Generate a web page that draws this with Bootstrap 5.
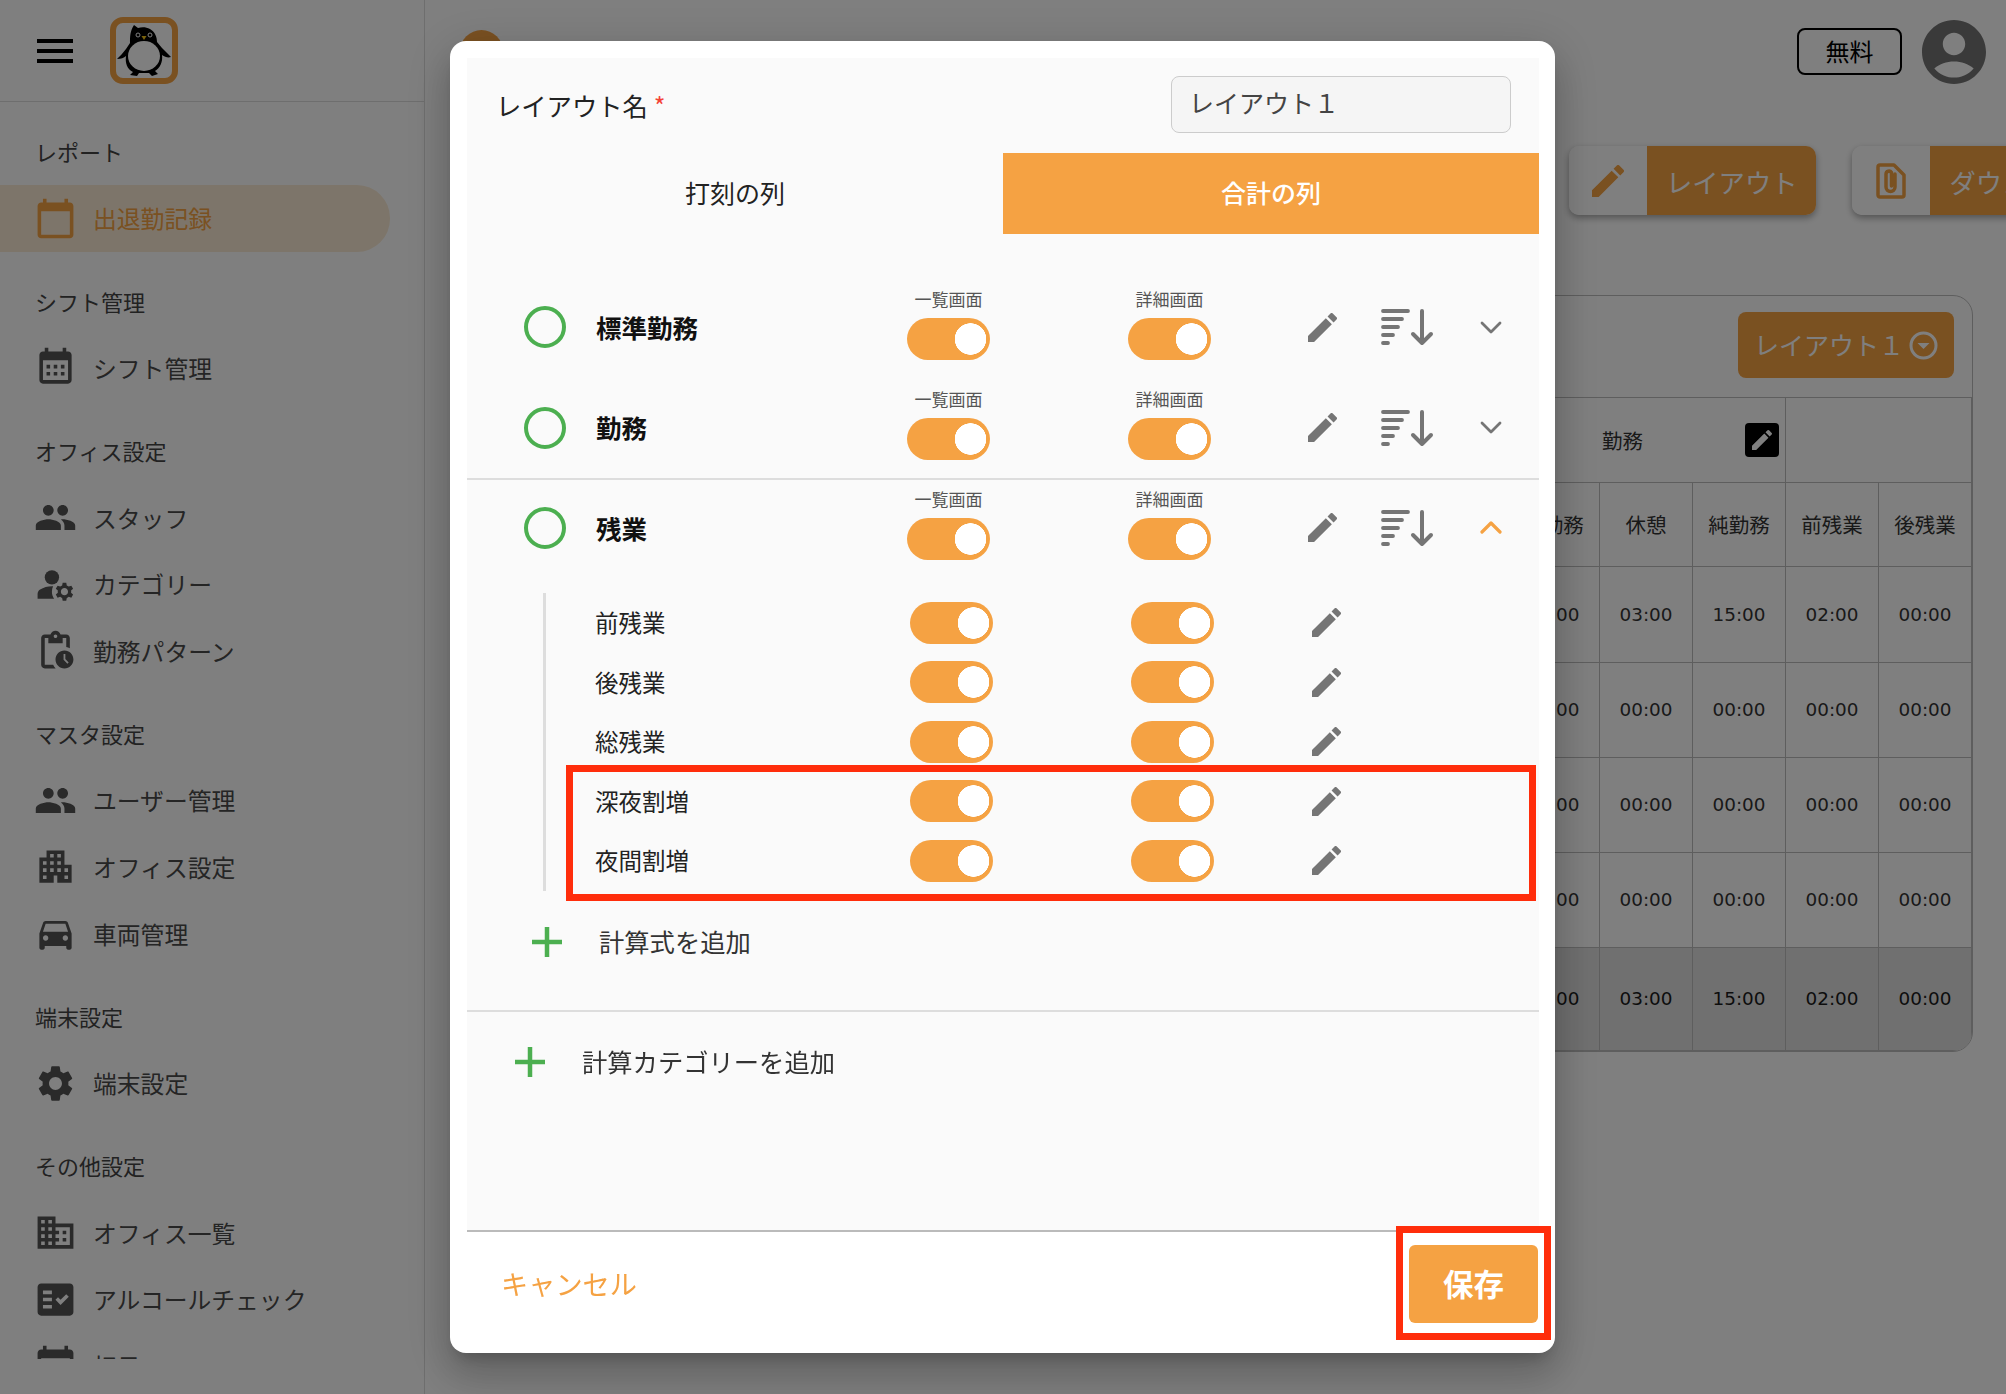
<!DOCTYPE html>
<html lang="ja">
<head>
  <meta charset="UTF-8" />
  <meta name="viewport" content="width=device-width, initial-scale=1.0" />
  <title>レイアウト</title>
  <link href="https://cdn.jsdelivr.net/npm/bootstrap@5.3.3/dist/css/bootstrap.min.css" rel="stylesheet" />
  <style>
    :root { --app-orange: #f5a243; --app-green: #4caf50; --app-red: #ff2d0b; }
    body { font-family: "Noto Sans CJK JP", "Noto Sans", sans-serif; height: 100vh; overflow: hidden; background: #fff; color: #333; }
    .ic { fill: currentColor; display: block; flex-shrink: 0; }

    /* sidebar */
    .side { width: 425px; border-right: 1px solid #ddd; flex-shrink: 0; }
    .side-top { height: 102px; border-bottom: 1px solid #ddd; padding-left: 37px; }
    .burger { width: 36px; height: 24px; border-top: 4px solid #000; border-bottom: 4px solid #000; position: relative; }
    .burger::after { content: ""; position: absolute; left: 0; right: 0; top: 6px; height: 4px; background: #000; }
    .logo { width: 68px; height: 67px; margin-left: 37px; border: 6px solid var(--app-orange); border-radius: 13px; }
    .side-nav { height: 1257px; overflow: hidden; padding-top: 17px; }
    .side-sec { margin-bottom: 17px; }
    .side-title { height: 66px; line-height: 64px; padding-left: 35px; font-size: 22px; color: #444; }
    .side-item { height: 66.6px; display: flex; align-items: center; padding-left: 34px; font-size: 23.8px; color: #4a4a4a; width: 390px; text-decoration: none; }
    .side-item .ic { width: 43px; height: 43px; margin-right: 16px; color: #555; }
    .side-item.active { background: #fbebd5; color: var(--app-orange); border-radius: 0 33px 33px 0; }
    .side-item.active .ic { color: var(--app-orange); }

    /* page behind the dialog */
    .topbar { height: 103px; padding: 0 20px 0 35px; }
    .back-dot { width: 43px; height: 43px; background: var(--app-orange); }
    .plan { width: 105px; height: 47px; border: 2px solid #000; border-radius: 8px; font-size: 24px; color: #000; line-height: 42px; margin-right: 20px; }
    .avatar { width: 64px; height: 64px; color: #757575; }
    .tools { margin: 43px 0 0 1144px; gap: 36px; }
    .tool { height: 69px; border-radius: 10px; overflow: hidden; box-shadow: 0 3px 7px rgba(0,0,0,.35); flex-shrink: 0; }
    .tool-ic { width: 78px; color: var(--app-orange); background: #fff; }
    .tool-tx { background: var(--app-orange); color: #fff; font-size: 26.3px; padding: 3px 19px 0; white-space: nowrap; }
    .sheet { margin: 80px 33px 0 35px; border: 1px solid #bdbdbd; border-radius: 20px; overflow: hidden; background: #fff; }
    .sheet-top { height: 101px; padding: 16px 18px 0 0; }
    .layout-sel { width: 216px; height: 66px; background: var(--app-orange); border-radius: 8px; color: #fff; font-size: 25px; gap: 5px; }
    .grid { table-layout: fixed; margin: 0; --bs-border-color: #bdbdbd; }
    .grid td { padding: 0; text-align: center; vertical-align: middle; font-size: 20.5px; color: #333; }
    .grid .t { font-family: "DejaVu Sans", sans-serif; font-size: 18.4px; }
    .grid col.c { width: 93px; }
    .grid tr.total td { background: #e0e0e0; color: #1a1a1a; }
    .grp { padding-right: 6px; }
    .grp span { margin-right: 102px; }
    .grp-edit { width: 34px; height: 34px; background: #000; color: #fff; border-radius: 4px; }

    /* dialog */
    .modal-dialog.dlg { max-width: 1105px; width: 1105px; margin: 41px 0 0 450px; }
    .dlg .modal-content { height: 1312px; border: 0; border-radius: 16px; padding: 17px 16px 0 17px; box-shadow: 0 11px 15px -7px rgba(0,0,0,.2), 0 24px 38px 3px rgba(0,0,0,.14), 0 9px 46px 8px rgba(0,0,0,.12); }
    .panel { height: 1174px; background: #fafafa; border-bottom: 2px solid #bbb; color: #222; font-size: 25.3px; }
    .pan-head { height: 95px; padding: 0 28px 0 29px; }
    .pan-head label { font-size: 25.3px; margin-top: 1px; }
    .pan-head label i { color: #f44336; font-style: normal; font-size: 25px; margin-left: 6px; line-height: 1; }
    .pan-head .form-control { width: 340px; height: 57px; background: #f5f5f5; border-color: #ccc; border-radius: 8px; padding: 0 17px 6px; font-size: 25px; color: #444; margin-top: -2px; }
    .tabs .nav-link { height: 81px; line-height: 78px; padding: 0; color: #222; font-size: 25px; border-radius: 0; }
    .tabs .nav-link.active { background: var(--app-orange); color: #fff; font-weight: 500; }
    .cat-list { margin-top: 43px; }
    .cat { display: flex; align-items: center; height: 100.4px; padding-left: 57px; }
    .cat.sep { border-top: 2px solid #ddd; padding-bottom: 2px; }
    .dot { width: 42px; height: 42px; border: 4px solid var(--app-green); margin-right: 30px; flex-shrink: 0; }
    .cat-name { width: 292.5px; font-weight: 700; color: #111; font-size: 25.5px; }
    .tog-col { width: 120px; align-self: flex-start; padding-top: 12px; text-align: center; }
    .cat.sep .tog-col { padding-top: 9px; }
    .tog-col small { display: block; height: 20px; line-height: 20px; margin-bottom: 9px; font-size: 17px; color: #555; }
    .tog-col + .tog-col { margin-left: 101px; }
    .tg.form-check.form-switch { padding: 0; margin: 0; min-height: 0; display: flex; justify-content: center; }
    .tg .form-check-input, .tg .form-check-input:checked { width: 83px; height: 42px; margin: 0; border: 0; border-radius: 21px; background: var(--app-orange) radial-gradient(circle at 63.5px 21px, #fff 15.5px, transparent 16px); box-shadow: none; }
    .act { color: #757575; }
    .act.edit { width: 29px; height: 29px; }
    .cat .edit { margin-left: 78px; }
    .cat .sort { margin-left: 44px; margin-right: 46px; width: 53px; height: 38px; }
    .chev { width: 22px; height: 13px; fill: none; stroke: #757575; stroke-width: 2.8; stroke-linecap: round; stroke-linejoin: round; }
    .chev.open { stroke: var(--app-orange); stroke-width: 3.2; }
    .subs { margin: 15px 0 0 76px; border-left: 3px solid #ddd; }
    .sub { display: flex; align-items: center; height: 59.5px; padding-left: 49px; font-size: 23.5px; }
    .sub-name { width: 314.5px; }
    .sub .tg { width: 84px; }
    .sub .tg + .tg { margin-left: 137px; }
    .sub .edit { margin-left: 97.5px; }
    .marked { position: relative; }
    .marked::after, .save-wrap::after { content: ""; position: absolute; border: 7px solid var(--app-red); pointer-events: none; }
    .marked::after { top: -7px; bottom: -10px; left: 20px; right: 3px; }
    .add { display: flex; align-items: center; gap: 37px; color: #333; }
    .add svg { width: 30px; height: 30px; stroke: var(--app-green); stroke-width: 4.5; flex-shrink: 0; }
    .add.inner { height: 60px; margin-top: 21px; padding-left: 65px; }
    .add.outer { height: 102px; margin-top: 38px; padding-left: 48px; border-top: 2px solid #ddd; }
    .dlg-foot { height: 121px; padding: 0 1px 18px 34px; }
    .cancel { color: var(--app-orange); font-size: 27.2px; background: none; border: 0; padding: 0; }
    .save-wrap { position: relative; }
    .save-wrap::after { top: -19px; bottom: -17px; left: -13px; right: -13px; }
    .save { width: 129px; height: 78px; background: var(--app-orange); color: #fff; border: 0; border-radius: 6px; font-size: 30.5px; font-weight: 700; padding: 0; }
  </style>
</head>
<body>
  <svg class="d-none">
    <symbol id="i-edit" viewBox="3 3 18 18"><path d="M3 17.25V21h3.75L17.81 9.94l-3.75-3.75L3 17.25zM20.71 7.04a1 1 0 0 0 0-1.41l-2.34-2.34a1 1 0 0 0-1.41 0l-1.83 1.83 3.75 3.75 1.83-1.83z"/></symbol>
    <symbol id="i-cal" viewBox="0 0 24 24"><path d="M20 3h-1V1h-2v2H7V1H5v2H4c-1.1 0-2 .9-2 2v16c0 1.1.9 2 2 2h16c1.100 0 2-.9 2-2V5c0-1.1-.9-2-2-2zm0 18H4V8h16v13z"/></symbol>
    <symbol id="i-shift" viewBox="0 0 24 24"><path d="M19 3h-1V1h-2v2H8V1H6v2H5c-1.11 0-1.99.9-1.99 2L3 19c0 1.100.89 2 2 2h14c1.100 0 2-.9 2-2V5c0-1.100-.9-2-2-2zm0 16H5V8h14v11z"/><path d="M7 10.500h2v2H7zM11 10.500h2v2h-2zM15 10.500h2v2h-2zM7 14.500h2v2H7zM11 14.500h2v2h-2zM15 14.500h2v2h-2z"/></symbol>
    <symbol id="i-people" viewBox="0 0 24 24"><path d="M16 11c1.660 0 2.990-1.340 2.990-3S17.660 5 16 5c-1.660 0-3 1.340-3 3s1.340 3 3 3zm-8 0c1.660 0 2.990-1.340 2.990-3S9.660 5 8 5C6.340 5 5 6.340 5 8s1.340 3 3 3zm0 2c-2.330 0-7 1.170-7 3.500V19h14v-2.500c0-2.330-4.670-3.500-7-3.500zm8 0c-.29 0-.62.02-.97.05 1.160.84 1.970 1.970 1.970 3.450V19h6v-2.500c0-2.330-4.670-3.500-7-3.500z"/></symbol>
    <symbol id="i-cat" viewBox="0 0 24 24"><circle cx="10" cy="8" r="4"/><path d="M10.670 13.020C10.450 13.010 10.230 13 10 13c-2.420 0-4.680.67-6.610 1.820C2.510 15.340 2 16.320 2 17.350V20h9.260C10.470 18.870 10 17.490 10 16c0-1.070.25-2.070.67-2.980z"/><path d="M20.750 16c0-.22-.03-.42-.06-.63l1.140-1.010-1-1.730-1.450.49c-.32-.27-.68-.48-1.080-.63L18 11h-2l-.3 1.490c-.4.15-.76.36-1.080.63l-1.450-.49-1 1.730 1.140 1.010c-.03.21-.06.41-.06.63s.03.42.06.63l-1.140 1.010 1 1.730 1.450-.49c.32.27.68.48 1.080.63L16 21h2l.3-1.490c.4-.15.76-.36 1.080-.63l1.450.49 1-1.730-1.140-1.010c.03-.21.06-.41.06-.63zM17 18c-1.100 0-2-.9-2-2s.9-2 2-2 2 .9 2 2-.9 2-2 2z"/></symbol>
    <symbol id="i-pattern" viewBox="0 0 24 24"><path d="M17 12c-2.760 0-5 2.240-5 5s2.240 5 5 5 5-2.240 5-5-2.240-5-5-5zm1.650 7.350L16.500 17.200V14h1v2.790l1.850 1.850-.7.71zM18 3h-3.180C14.400 1.840 13.300 1 12 1s-2.400.84-2.820 2H6c-1.100 0-2 .9-2 2v15c0 1.100.9 2 2 2h6.110c-.59-.57-1.070-1.250-1.420-2H6V5h2v3h8V5h2v5.080c.71.1 1.380.31 2 .6V5c0-1.100-.9-2-2-2zm-6 2c-.55 0-1-.45-1-1s.45-1 1-1 1 .45 1 1-.45 1-1 1z"/></symbol>
    <symbol id="i-office" viewBox="0 0 24 24"><path d="M17 11V3H7v4H3v14h8v-4h2v4h8V11h-4zM7 19H5v-2h2v2zm0-4H5v-2h2v2zm0-4H5V9h2v2zm4 4H9v-2h2v2zm0-4H9V9h2v2zm0-4H9V5h2v2zm4 8h-2v-2h2v2zm0-4h-2V9h2v2zm0-4h-2V5h2v2zm4 12h-2v-2h2v2zm0-4h-2v-2h2v2z"/></symbol>
    <symbol id="i-car" viewBox="0 0 24 24"><path d="M18.920 6.010C18.720 5.420 18.160 5 17.500 5h-11c-.66 0-1.210.42-1.420 1.010L3 12v8c0 .55.45 1 1 1h1c.55 0 1-.45 1-1v-1h12v1c0 .55.45 1 1 1h1c.55 0 1-.45 1-1v-8l-2.080-5.990zM6.500 16c-.83 0-1.500-.67-1.500-1.500S5.670 13 6.500 13s1.500.67 1.500 1.500S7.330 16 6.500 16zm11 0c-.83 0-1.500-.67-1.500-1.500s.67-1.500 1.500-1.500 1.500.67 1.500 1.500-.67 1.500-1.500 1.500zM5 11l1.500-4.500h11L19 11H5z"/></symbol>
    <symbol id="i-gear" viewBox="0 0 24 24"><path d="M19.140 12.940c.04-.3.06-.61.06-.94 0-.32-.02-.64-.07-.94l2.030-1.580c.18-.14.23-.41.12-.61l-1.920-3.320c-.12-.22-.37-.29-.59-.22l-2.390.96c-.5-.38-1.030-.7-1.620-.94l-.36-2.540c-.04-.24-.24-.41-.48-.41h-3.840c-.24 0-.43.17-.47.41l-.36 2.540c-.59.24-1.130.57-1.620.94l-2.390-.96c-.22-.08-.47 0-.59.22L2.740 8.870c-.12.21-.08.47.12.61l2.030 1.580c-.05.3-.09.63-.09.94s.02.64.07.94l-2.030 1.580c-.18.14-.23.41-.12.61l1.920 3.320c.12.22.37.29.59.22l2.390-.96c.5.38 1.030.7 1.620.94l.36 2.540c.05.24.24.41.48.41h3.840c.24 0 .44-.17.47-.41l.36-2.540c.59-.24 1.130-.56 1.620-.94l2.390.96c.22.08.47 0 .59-.22l1.920-3.320c.12-.22.07-.47-.12-.61l-2.010-1.580zM12 15.600c-1.980 0-3.600-1.620-3.600-3.600s1.620-3.600 3.600-3.600 3.600 1.620 3.600 3.600-1.620 3.600-3.600 3.600z"/></symbol>
    <symbol id="i-biz" viewBox="0 0 24 24"><path d="M12 7V3H2v18h20V7H12zM6 19H4v-2h2v2zm0-4H4v-2h2v2zm0-4H4V9h2v2zm0-4H4V5h2v2zm4 12H8v-2h2v2zm0-4H8v-2h2v2zm0-4H8V9h2v2zm0-4H8V5h2v2zm10 12h-8v-2h2v-2h-2v-2h2v-2h-2V9h8v10zm-2-8h-2v2h2v-2zm0 4h-2v2h2v-2z"/></symbol>
    <symbol id="i-check" viewBox="0 0 24 24"><path d="M20 3H4c-1.100 0-2 .9-2 2v14c0 1.100.9 2 2 2h16c1.100 0 2-.9 2-2V5c0-1.100-.9-2-2-2zM10 17H5v-2h5v2zm0-4H5v-2h5v2zm0-4H5V7h5v2zm4.820 6L12 12.160l1.410-1.410 1.410 1.420L17.990 9l1.420 1.420L14.820 15z"/></symbol>
    <symbol id="i-sort" viewBox="0 0 53 38"><g fill="none" stroke="currentColor" stroke-linecap="round" stroke-linejoin="round"><path stroke-width="3.800" d="M2 3h25M2 11h19M2 19h15M2 27h10M2 35h5"/><path stroke-width="4" d="M41 3v32M32 26l9 9 9-9"/></g></symbol>
    <symbol id="i-plus" viewBox="0 0 30 30"><path d="M15 0v30M0 15h30"/></symbol>
  </svg>

  <div class="d-flex h-100">
    <aside class="side">
      <div class="side-top d-flex align-items-center">
        <div class="burger"></div>
        <div class="logo d-flex align-items-center justify-content-center">
          <svg width="54" height="52" viewBox="0 0 54 52">
            <path fill="#000" d="M17 0l4 3c4-1 8-1 12 1 5 3 7 8 7 13l5 6c3 3 6 6 9 9-3 1-6 0-9-2 1 7-2 13-7 16l3 3-6 2-3-3H22l-2 3-7-1 3-3c-6-3-8-9-7-16-2 2-5 3-9 3 3-3 6-6 9-10l4-6c0-6 0-12 4-18z"/>
            <ellipse cx="27" cy="31" rx="16" ry="15" fill="#fff"/>
            <circle cx="21" cy="10" r="2" fill="none" stroke="#fff"/><circle cx="33" cy="10" r="2" fill="none" stroke="#fff"/>
            <path fill="#f5c518" d="M24.500 11h5L27 15z"/>
          </svg>
        </div>
      </div>
      <nav class="side-nav">
        <div class="side-sec">
          <div class="side-title">レポート</div>
          <a class="side-item active"><svg class="ic"><use href="#i-cal"/></svg>出退勤記録</a>
        </div>
        <div class="side-sec">
          <div class="side-title">シフト管理</div>
          <a class="side-item"><svg class="ic"><use href="#i-shift"/></svg>シフト管理</a>
        </div>
        <div class="side-sec">
          <div class="side-title">オフィス設定</div>
          <a class="side-item"><svg class="ic"><use href="#i-people"/></svg>スタッフ</a>
          <a class="side-item"><svg class="ic"><use href="#i-cat"/></svg>カテゴリー</a>
          <a class="side-item"><svg class="ic"><use href="#i-pattern"/></svg>勤務パターン</a>
        </div>
        <div class="side-sec">
          <div class="side-title">マスタ設定</div>
          <a class="side-item"><svg class="ic"><use href="#i-people"/></svg>ユーザー管理</a>
          <a class="side-item"><svg class="ic"><use href="#i-office"/></svg>オフィス設定</a>
          <a class="side-item"><svg class="ic"><use href="#i-car"/></svg>車両管理</a>
        </div>
        <div class="side-sec">
          <div class="side-title">端末設定</div>
          <a class="side-item"><svg class="ic"><use href="#i-gear"/></svg>端末設定</a>
        </div>
        <div class="side-sec">
          <div class="side-title">その他設定</div>
          <a class="side-item"><svg class="ic"><use href="#i-biz"/></svg>オフィス一覧</a>
          <a class="side-item"><svg class="ic"><use href="#i-check"/></svg>アルコールチェック</a>
          <a class="side-item"><svg class="ic"><use href="#i-cal"/></svg>祝日</a>
        </div>
      </nav>
    </aside>

    <main class="flex-grow-1 overflow-hidden">
      <div class="topbar d-flex align-items-center">
        <div class="back-dot rounded-circle me-auto"></div>
        <div class="plan text-center">無料</div>
        <svg class="ic avatar" viewBox="2 2 20 20"><path d="M12 2C6.480 2 2 6.480 2 12s4.480 10 10 10 10-4.480 10-10S17.520 2 12 2zm0 4c1.930 0 3.500 1.570 3.500 3.500S13.930 13 12 13s-3.500-1.570-3.500-3.500S10.070 6 12 6zm0 14c-2.030 0-4.430-.82-6.140-2.880C7.550 15.800 9.680 15 12 15s4.450.8 6.140 2.120C16.430 19.180 14.030 20 12 20z"/></svg>
      </div>
      <div class="tools d-flex">
        <div class="tool d-flex">
          <div class="tool-ic d-flex align-items-center justify-content-center"><svg class="ic" width="32" height="32"><use href="#i-edit"/></svg></div>
          <div class="tool-tx d-flex align-items-center">レイアウト</div>
        </div>
        <div class="tool d-flex">
          <div class="tool-ic d-flex align-items-center justify-content-center">
            <svg width="30" height="36" viewBox="0 0 30 36" fill="none" stroke="currentColor" stroke-width="3.500" stroke-linejoin="round"><path d="M4 2h14l10 10v20a2 2 0 0 1-2 2H4a2 2 0 0 1-2-2V4a2 2 0 0 1 2-2z"/><path stroke-linecap="round" d="M19 11v13a4.500 4.500 0 0 1-9 0V11a3 3 0 0 1 5.500-1.500V23"/></svg>
          </div>
          <div class="tool-tx d-flex align-items-center">ダウンロード</div>
        </div>
      </div>
      <div class="sheet">
        <div class="sheet-top d-flex justify-content-end">
          <div class="layout-sel d-flex align-items-center justify-content-center">
            レイアウト１
            <svg width="29" height="29" viewBox="0 0 29 29"><circle cx="14.500" cy="14.500" r="12.500" fill="none" stroke="#fff" stroke-width="3"/><path fill="#fff" d="M8.500 12h12l-6 6z"/></svg>
          </div>
        </div>
        <table class="table table-bordered grid">
          <colgroup><col /><col class="c" /><col class="c" /><col class="c" /><col class="c" /><col class="c" /></colgroup>
          <tbody>
            <tr style="height:85px">
              <td colspan="4"><div class="grp d-flex align-items-center justify-content-end"><span>勤務</span><div class="grp-edit d-flex align-items-center justify-content-center"><svg class="ic" width="20" height="20"><use href="#i-edit"/></svg></div></div></td>
              <td colspan="2"></td>
            </tr>
            <tr style="height:84px"><td></td><td>総勤務</td><td>休憩</td><td>純勤務</td><td>前残業</td><td>後残業</td></tr>
            <tr style="height:96px"><td></td><td class="t">18:00</td><td class="t">03:00</td><td class="t">15:00</td><td class="t">02:00</td><td class="t">00:00</td></tr>
            <tr style="height:95px"><td></td><td class="t">00:00</td><td class="t">00:00</td><td class="t">00:00</td><td class="t">00:00</td><td class="t">00:00</td></tr>
            <tr style="height:95px"><td></td><td class="t">00:00</td><td class="t">00:00</td><td class="t">00:00</td><td class="t">00:00</td><td class="t">00:00</td></tr>
            <tr style="height:95px"><td></td><td class="t">00:00</td><td class="t">00:00</td><td class="t">00:00</td><td class="t">00:00</td><td class="t">00:00</td></tr>
            <tr class="total" style="height:103px"><td></td><td class="t">18:00</td><td class="t">03:00</td><td class="t">15:00</td><td class="t">02:00</td><td class="t">00:00</td></tr>
          </tbody>
        </table>
      </div>
    </main>
  </div>

  <div class="modal-backdrop fade show"></div>
  <div class="modal d-block" tabindex="-1">
    <div class="modal-dialog dlg">
      <div class="modal-content">
        <div class="panel">
          <div class="pan-head d-flex align-items-center justify-content-between">
            <label for="layoutName">レイアウト名<i>*</i></label>
            <input id="layoutName" type="text" class="form-control" value="レイアウト１" />
          </div>
          <ul class="nav nav-fill tabs">
            <li class="nav-item"><a class="nav-link" href="#">打刻の列</a></li>
            <li class="nav-item"><a class="nav-link active" href="#">合計の列</a></li>
          </ul>

          <div class="cat-list" id="cats"></div>
          <div class="subs" id="subs"></div>
          <div class="add inner"><svg><use href="#i-plus"/></svg>計算式を追加</div>
          <div class="add outer"><svg><use href="#i-plus"/></svg>計算カテゴリーを追加</div>
        </div>
        <div class="dlg-foot d-flex align-items-center justify-content-between">
          <button type="button" class="cancel">キャンセル</button>
          <div class="save-wrap"><button type="button" class="save">保存</button></div>
        </div>
      </div>
    </div>
  </div>

  <script>
    function toggle() {
      return '<div class="form-check form-switch tg"><input class="form-check-input" type="checkbox" role="switch" checked /></div>';
    }
    function editIcon() {
      return '<svg class="ic act edit"><use href="#i-edit"/></svg>';
    }

    var cats = [
      { name: "標準勤務", open: false },
      { name: "勤務", open: false },
      { name: "残業", open: true }
    ];
    document.getElementById("cats").innerHTML = cats.map(function (c, i) {
      return '<div class="cat' + (i === 2 ? " sep" : "") + '">' +
        '<div class="dot rounded-circle"></div>' +
        '<div class="cat-name">' + c.name + '</div>' +
        '<div class="tog-col"><small>一覧画面</small>' + toggle() + '</div>' +
        '<div class="tog-col"><small>詳細画面</small>' + toggle() + '</div>' +
        editIcon() +
        '<svg class="ic act sort"><use href="#i-sort"/></svg>' +
        '<svg class="chev' + (c.open ? " open" : "") + '" viewBox="0 0 22 13"><path d="' + (c.open ? "M2 11l9-9 9 9" : "M2 2l9 9 9-9") + '"/></svg>' +
        '</div>';
    }).join("");

    function subRow(name) {
      return '<div class="sub"><div class="sub-name">' + name + '</div>' + toggle() + toggle() + editIcon() + '</div>';
    }
    document.getElementById("subs").innerHTML =
      ["前残業", "後残業", "総残業"].map(subRow).join("") +
      '<div class="marked">' + ["深夜割増", "夜間割増"].map(subRow).join("") + '</div>';
  </script>
  <script src="https://cdn.jsdelivr.net/npm/bootstrap@5.3.3/dist/js/bootstrap.bundle.min.js"></script>
</body>
</html>
